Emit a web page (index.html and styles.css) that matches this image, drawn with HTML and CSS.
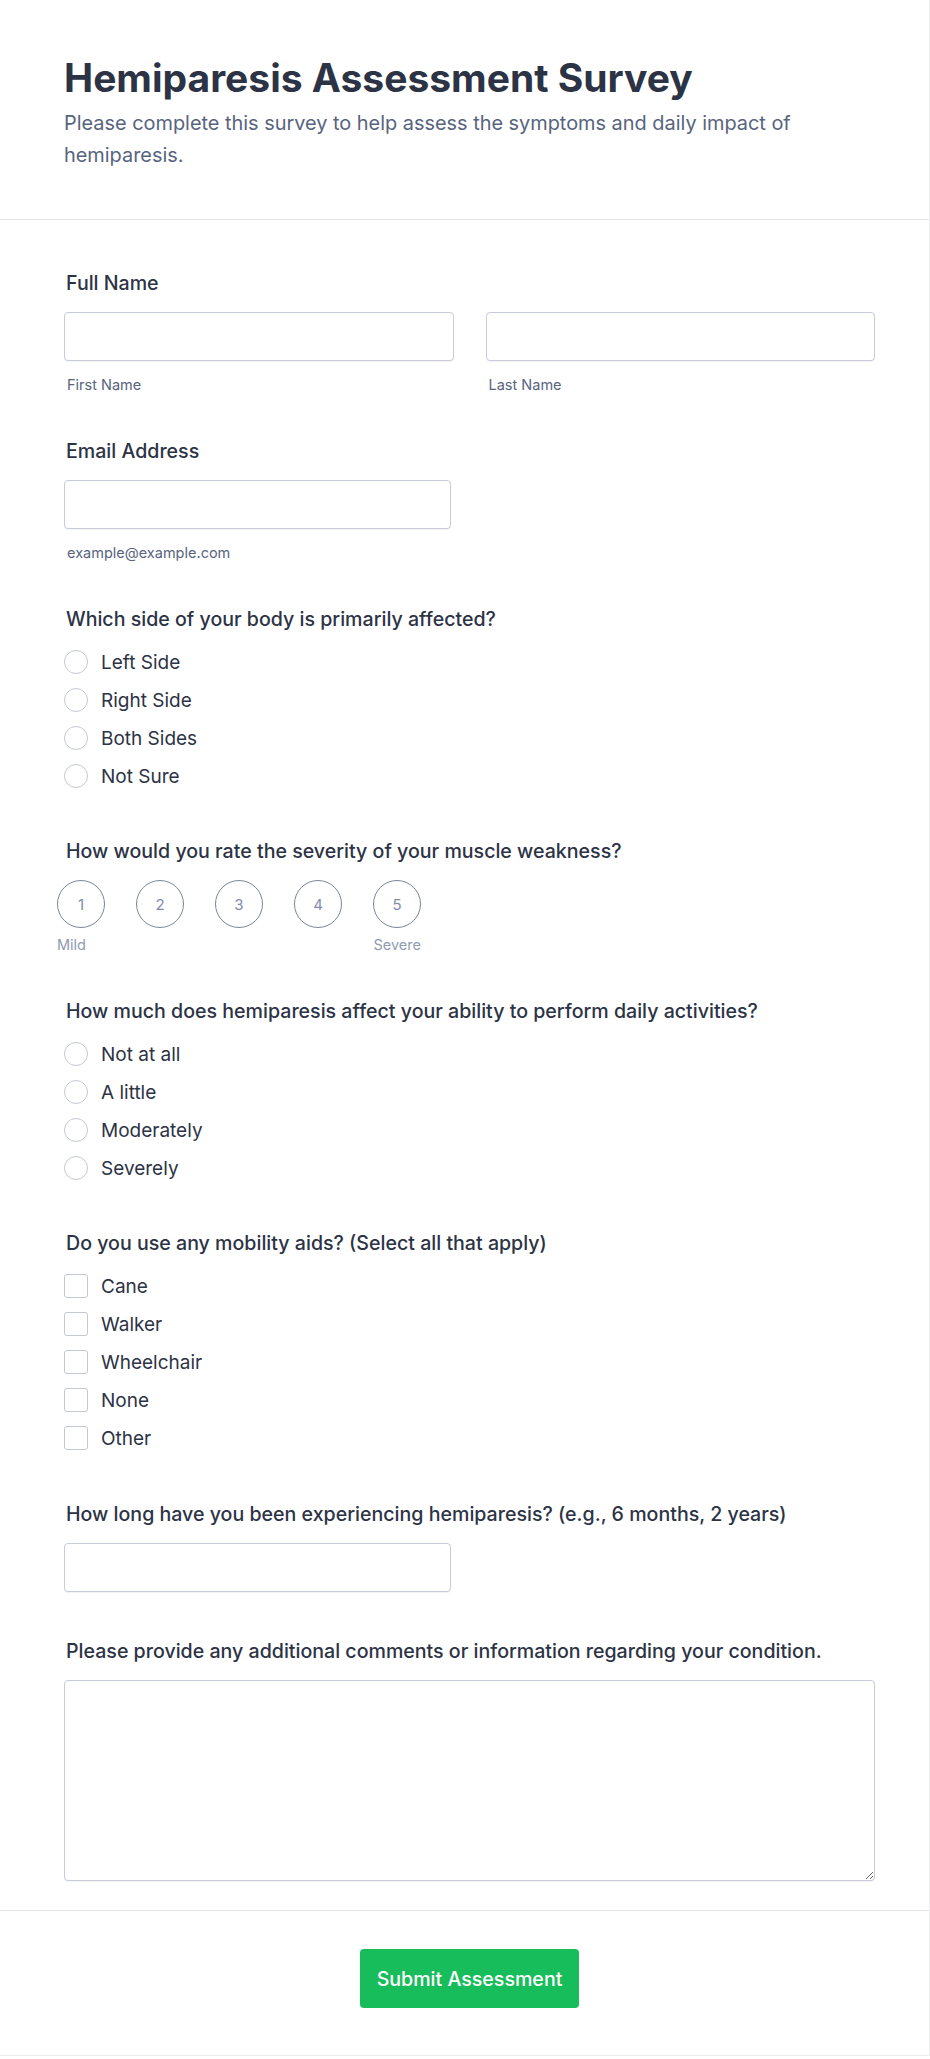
FILE: index.html
```html
<!DOCTYPE html>
<html lang="en">
<head>
<meta charset="utf-8">
<title>Hemiparesis Assessment Survey</title>
<link rel="stylesheet" href="styles.css">
</head>
<body>
<div class="card">
  <header class="header">
    <h1 class="title">Hemiparesis Assessment Survey</h1>
    <p class="subtitle">Please complete this survey to help assess the symptoms and daily impact of hemiparesis.</p>
  </header>
  <form class="body">
    <div class="field">
      <div class="label">Full Name</div>
      <div class="name-row">
        <div class="name-col">
          <input class="input" type="text">
          <div class="sublabel">First Name</div>
        </div>
        <div class="name-col">
          <input class="input" type="text">
          <div class="sublabel">Last Name</div>
        </div>
      </div>
    </div>

    <div class="field">
      <div class="label">Email Address</div>
      <input class="input input-half" type="email">
      <div class="sublabel">example@example.com</div>
    </div>

    <div class="field field-options">
      <div class="label">Which side of your body is primarily affected?</div>
      <div class="options">
        <label class="option"><input type="radio" name="side" class="radio"><span>Left Side</span></label>
        <label class="option"><input type="radio" name="side" class="radio"><span>Right Side</span></label>
        <label class="option"><input type="radio" name="side" class="radio"><span>Both Sides</span></label>
        <label class="option"><input type="radio" name="side" class="radio"><span>Not Sure</span></label>
      </div>
    </div>

    <div class="field">
      <div class="label">How would you rate the severity of your muscle weakness?</div>
      <div class="rating">
        <div class="rating-row">
          <span class="rate">1</span>
          <span class="rate">2</span>
          <span class="rate">3</span>
          <span class="rate">4</span>
          <span class="rate">5</span>
        </div>
        <div class="rating-labels">
          <span>Mild</span>
          <span>Severe</span>
        </div>
      </div>
    </div>

    <div class="field field-options">
      <div class="label">How much does hemiparesis affect your ability to perform daily activities?</div>
      <div class="options">
        <label class="option"><input type="radio" name="daily" class="radio"><span>Not at all</span></label>
        <label class="option"><input type="radio" name="daily" class="radio"><span>A little</span></label>
        <label class="option"><input type="radio" name="daily" class="radio"><span>Moderately</span></label>
        <label class="option"><input type="radio" name="daily" class="radio"><span>Severely</span></label>
      </div>
    </div>

    <div class="field field-checks">
      <div class="label">Do you use any mobility aids? (Select all that apply)</div>
      <div class="options">
        <label class="option"><input type="checkbox" class="check"><span>Cane</span></label>
        <label class="option"><input type="checkbox" class="check"><span>Walker</span></label>
        <label class="option"><input type="checkbox" class="check"><span>Wheelchair</span></label>
        <label class="option"><input type="checkbox" class="check"><span>None</span></label>
        <label class="option"><input type="checkbox" class="check"><span>Other</span></label>
      </div>
    </div>

    <div class="field field-input">
      <div class="label">How long have you been experiencing hemiparesis? (e.g., 6 months, 2 years)</div>
      <input class="input input-half" type="text">
    </div>

    <div class="field field-last">
      <div class="label">Please provide any additional comments or information regarding your condition.</div>
      <textarea class="textarea"></textarea>
    </div>
  </form>
  <footer class="footer">
    <button class="submit" type="button">Submit Assessment</button>
  </footer>
</div>
</body>
</html>
```

FILE: styles.css
```css
* {
  box-sizing: border-box;
}

html, body {
  margin: 0;
  padding: 0;
  background: #ffffff;
}

body {
  font-family: Inter, "Noto Sans", "Liberation Sans", sans-serif;
  color: #2c3345;
}

.card {
  width: 930px;
  background: #ffffff;
  border-right: 1px solid #eceef3;
  border-bottom: 1px solid #eceef3;
}

.header {
  padding: 56px 54px 48px 64px;
  border-bottom: 1px solid #e3e5ec;
}

.title {
  margin: 0 0 8px 0;
  font-size: 39px;
  line-height: 43px;
  font-weight: 700;
  color: #2c3345;
}

.subtitle {
  margin: 0;
  font-size: 19.9px;
  line-height: 32px;
  color: #57647e;
}

.body {
  padding: 49px 54px 29px 64px;
  margin: 0;
}

.field {
  margin-bottom: 42px;
}

.field-options {
  margin-bottom: 47px;
}

.field-checks {
  margin-bottom: 48px;
}

.field-input {
  margin-bottom: 45px;
}

.field-last {
  margin-bottom: 0;
}

.label {
  font-size: 19.6px;
  line-height: 28px;
  font-weight: 500;
  color: #2c3345;
  padding-left: 2px;
  margin-bottom: 15px;
}

.name-row {
  display: flex;
  gap: 32px;
}

.name-col {
  width: 390px;
}

.input {
  display: block;
  width: 100%;
  height: 49px;
  margin: 0;
  padding: 0 12px;
  border: 1px solid #c8ccd8;
  border-radius: 4px;
  background: #ffffff;
  box-shadow: 0 1px 1px rgba(44, 51, 69, 0.06);
  font-family: inherit;
  font-size: 16px;
  outline: none;
}

.input-half {
  width: 387px;
}

.sublabel {
  margin-top: 14px;
  padding-left: 3px;
  font-size: 14.5px;
  line-height: 20px;
  color: #57647e;
}

.options {
  display: flex;
  flex-direction: column;
  gap: 10px;
}

.option {
  display: flex;
  align-items: center;
  gap: 13px;
  height: 28px;
  font-size: 19px;
  color: #2c3345;
}

.radio,
.check {
  appearance: none;
  -webkit-appearance: none;
  margin: 0;
  width: 24px;
  height: 24px;
  flex: 0 0 24px;
  border: 1px solid #c3c8d4;
  background: #ffffff;
}

.radio {
  border-radius: 50%;
}

.check {
  border-radius: 3px;
}

.rating {
  margin-left: -7px;
  width: 364px;
}

.rating-row {
  display: flex;
  gap: 31px;
}

.rate {
  width: 48px;
  height: 48px;
  border: 1px solid #7d8599;
  border-radius: 50%;
  display: flex;
  align-items: center;
  justify-content: center;
  font-size: 15px;
  color: #7f8dab;
}

.rating-labels {
  display: flex;
  justify-content: space-between;
  margin-top: 7px;
  font-size: 14.5px;
  line-height: 20px;
  color: #8f9bb3;
}

.textarea {
  display: block;
  width: 100%;
  height: 201px;
  margin: 0;
  padding: 10px 12px;
  border: 1px solid #c8ccd8;
  border-radius: 4px;
  box-shadow: 0 1px 1px rgba(44, 51, 69, 0.06);
  font-family: inherit;
  font-size: 16px;
  resize: vertical;
  outline: none;
}

.footer {
  border-top: 1px solid #e3e5ec;
  padding: 38px 54px 47px 64px;
  display: flex;
  justify-content: center;
}

.submit {
  height: 59px;
  padding: 0 17px;
  border: none;
  border-radius: 4px;
  background: #18bd5b;
  color: #ffffff;
  font-family: inherit;
  font-size: 19.6px;
  font-weight: 500;
}
```
